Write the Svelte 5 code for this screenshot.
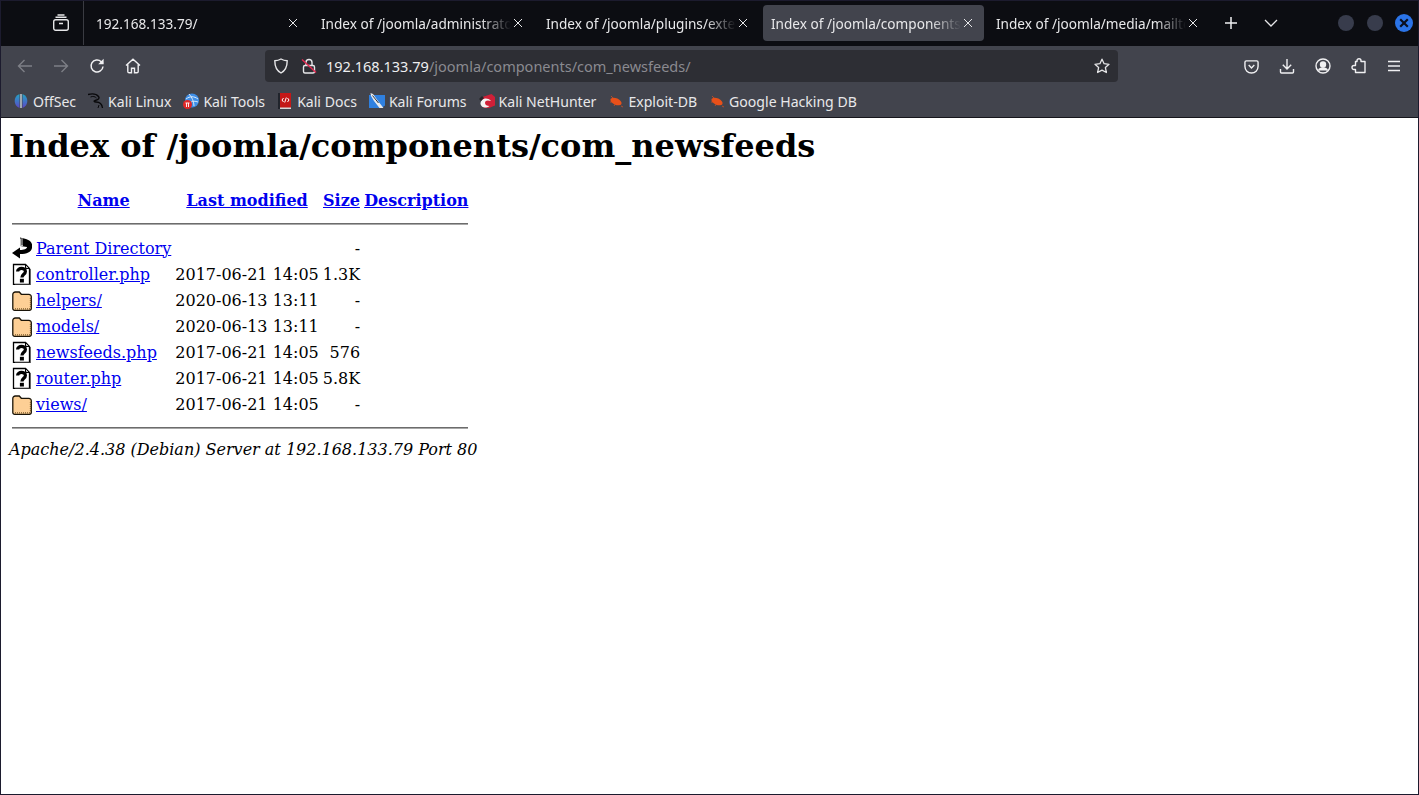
<script>
  const tabs = [
    { title: "192.168.133.79/" },
    { title: "Index of /joomla/administrator/" },
    { title: "Index of /joomla/plugins/extension/" },
    { title: "Index of /joomla/components/com_newsfeeds", active: true },
    { title: "Index of /joomla/media/mailto/" }
  ]

  const bookmarks = [
    { name: "OffSec", icon: "offsec" },
    { name: "Kali Linux", icon: "kali" },
    { name: "Kali Tools", icon: "tools" },
    { name: "Kali Docs", icon: "docs" },
    { name: "Kali Forums", icon: "forums" },
    { name: "Kali NetHunter", icon: "nethunter" },
    { name: "Exploit-DB", icon: "bug" },
    { name: "Google Hacking DB", icon: "bug" }
  ]

  const files = [
    { name: "Parent Directory", date: "", size: "-", icon: "back" },
    { name: "controller.php", date: "2017-06-21 14:05", size: "1.3K", icon: "unknown" },
    { name: "helpers/", date: "2020-06-13 13:11", size: "-", icon: "folder" },
    { name: "models/", date: "2020-06-13 13:11", size: "-", icon: "folder" },
    { name: "newsfeeds.php", date: "2017-06-21 14:05", size: "576", icon: "unknown" },
    { name: "router.php", date: "2017-06-21 14:05", size: "5.8K", icon: "unknown" },
    { name: "views/", date: "2017-06-21 14:05", size: "-", icon: "folder" }
  ]
</script>

<div class="window">
  <div class="tabbar">
    <div class="tabview">
      <svg width="18" height="18" viewBox="0 0 18 18" fill="none" stroke="#e6e6e8" stroke-width="1.4">
        <rect x="1.700" y="5.700" width="14.600" height="10.600" rx="2" />
        <path d="M3.500 3.200h11M5.500 1h7M7 9.500h4" />
      </svg>
    </div>
    <div class="tabs">
      {#each tabs as tab}
        <div class="tab" class:active={tab.active}>
          <span class="tabtitle">{tab.title}</span>
          <svg class="tabclose" width="10" height="10" viewBox="0 0 10 10" stroke="#e6e6e8" stroke-width="1">
            <path d="M1 1l8 8M9 1l-8 8" />
          </svg>
        </div>
      {/each}
    </div>
    <div class="tabactions">
      <svg width="14" height="14" viewBox="0 0 14 14" stroke="#f0f0f2" stroke-width="1.500"><path d="M7 1v12M1 7h12" /></svg>
      <svg width="14" height="8" viewBox="0 0 14 8" fill="none" stroke="#e6e6e8" stroke-width="1.300"><path d="M1 1l6 6 6-6" /></svg>
    </div>
    <div class="winbtns">
      <span class="winbtn"></span>
      <span class="winbtn"></span>
      <span class="winbtn close">
        <svg width="10" height="10" viewBox="0 0 10 10" stroke="#0b1020" stroke-width="2.200"><path d="M1.200 1.200l7.600 7.600M8.800 1.200l-7.600 7.600" /></svg>
      </span>
    </div>
  </div>

  <div class="navbar">
    <div class="navbtns">
      <svg width="16" height="16" viewBox="0 0 16 16" fill="none" stroke="#7d7f86" stroke-width="1.400"><path d="M15 8H1.500M7.500 2L1.500 8l6 6" /></svg>
      <svg width="16" height="16" viewBox="0 0 16 16" fill="none" stroke="#7d7f86" stroke-width="1.400"><path d="M1 8h13.500M8.500 2l6 6-6 6" /></svg>
      <svg width="16" height="16" viewBox="0 0 16 16" fill="none" stroke="#f0f0f2" stroke-width="1.500"><path d="M14 8.500a6 6 0 1 1-1.800-4.800L14 5.500" /><path d="M14.600 0.800v5.400H9.200" fill="#f0f0f2" stroke="none" /></svg>
      <svg width="16" height="16" viewBox="0 0 16 16" fill="none" stroke="#f0f0f2" stroke-width="1.400"><path d="M1 7.500L8 1.200l7 6.300M2.800 6.500v7a1.300 1.300 0 0 0 1.300 1.300h2.400v-4.500h3v4.500h2.400a1.300 1.300 0 0 0 1.300-1.300v-7" /></svg>
    </div>
    <div class="urlbar">
      <svg width="16" height="16" viewBox="0 0 16 16" fill="none" stroke="#e6e6e8" stroke-width="1.400"><path d="M8 1c2 1.200 4 1.700 6.200 1.800 0 5.700-1.700 9.900-6.200 12.200C3.500 12.700 1.800 8.500 1.800 2.800 4 2.700 6 2.200 8 1z" /></svg>
      <svg class="lock" width="16" height="16" viewBox="0 0 16 16" fill="none" stroke="#e6e6e8" stroke-width="1.400">
        <rect x="2.500" y="7.500" width="11" height="7.500" rx="1.500" />
        <path d="M5 7.500V4.500a3 3 0 0 1 6 0v3" />
        <path d="M1 1.500l14 13" stroke="#e22850" stroke-width="1.500" />
      </svg>
      <div class="url"><span class="host">192.168.133.79</span><span class="path">/joomla/components/com_newsfeeds/</span></div>
      <svg width="16" height="16" viewBox="0 0 16 16" fill="none" stroke="#e6e6e8" stroke-width="1.300"><path d="M8 1.200l2.100 4.500 4.900.6-3.600 3.300 1 4.900L8 12.100l-4.400 2.400 1-4.900L1 6.300l4.900-.6z" stroke-linejoin="round" /></svg>
    </div>
    <div class="navtools">
      <svg width="15" height="15" viewBox="0 0 16 16" fill="none" stroke="#f0f0f2" stroke-width="1.500"><path d="M2.500 2h11A1.500 1.500 0 0 1 15 3.500V8a7 7 0 0 1-14 0V3.500A1.500 1.500 0 0 1 2.500 2z" /><path d="M5 6.500L8 9.500l3-3" /></svg>
      <svg width="16" height="16" viewBox="0 0 16 16" fill="none" stroke="#f0f0f2" stroke-width="1.400"><path d="M8 1v10M3.800 6.800L8 11l4.200-4.200M1.500 11v3a1 1 0 0 0 1 1h11a1 1 0 0 0 1-1v-3" /></svg>
      <svg width="16" height="16" viewBox="0 0 16 16" fill="none" stroke="#f0f0f2" stroke-width="1.400"><circle cx="8" cy="8" r="7" /><circle cx="8" cy="6.500" r="2.500" fill="#f0f0f2" /><path d="M3.500 12.500c1-2 2.500-2.500 4.500-2.500s3.500.5 4.500 2.500" fill="#f0f0f2" /></svg>
      <svg width="16" height="16" viewBox="0 0 16 16" fill="none" stroke="#f0f0f2" stroke-width="1.400"><path d="M6 3.500V2.700a2 2 0 0 1 4 0v.8h4v11H4.500v-3H3a2 2 0 0 1 0-4h1.500v-4z" stroke-linejoin="round" /></svg>
      <svg width="14" height="14" viewBox="0 0 14 14" stroke="#f0f0f2" stroke-width="1.500"><path d="M1 2.500h12M1 7h12M1 11.500h12" /></svg>
    </div>
  </div>

  <div class="bookmarks">
    {#each bookmarks as mark}
      <div class="mark">
        <svg class="favicon" width="16" height="16" viewBox="0 0 16 16">
          {#if mark.icon === "offsec"}
            <defs>
              <linearGradient id="offsec-grad" x1="0" y1="0" x2="0" y2="1">
                <stop offset="0" stop-color="#22a4c4" />
                <stop offset="1" stop-color="#5c48c8" />
              </linearGradient>
            </defs>
            <path d="M6.500 1A7.500 7.500 0 0 0 6.500 15z" fill="url(#offsec-grad)" />
            <path d="M9.500 1A7.500 7.500 0 0 1 9.500 15z" fill="url(#offsec-grad)" />
            <path d="M7.300 1h1.400v14H7.300z" fill="#c8d4dc" />
          {:else if mark.icon === "kali"}
            <path d="M0 1.500C4 .5 8.500 1 10.500 3.500 12 5.500 10 7 7 7.500 5.500 8 6 9 8 9c3 0 6 2 6.500 6" fill="none" stroke="#08080a" stroke-width="1.300" />
            <path d="M2.500 4C5 3 7 3.500 8.500 5M11 12l-1 3" fill="none" stroke="#08080a" stroke-width="1" />
          {:else if mark.icon === "tools"}
            <circle cx="9" cy="7.500" r="7" fill="#3f8fe8" />
            <path d="M3 6c4-3 8-3 12 0M6 1c3 3 5 8 5 12M8 9c2-1 4-1 7 0" stroke="#d8e8f8" stroke-width="1" fill="none" />
            <circle cx="4.500" cy="11.500" r="4.500" fill="#e02828" />
            <path d="M2.500 10h4M3.500 10v4M5.500 10v4" stroke="#fff" stroke-width=".9" />
          {:else if mark.icon === "docs"}
            <rect x="1" y="0" width="13" height="15" fill="#c41818" />
            <rect x="1" y="0" width="2" height="16" fill="#20242c" />
            <rect x="3" y="14.500" width="11" height="1.500" fill="#d8d8d8" />
            <path d="M6.500 5L5 7l1.500 2M10.500 5L12 7l-1.500 2M9.300 4.500L7.700 9.500" stroke="#fff" stroke-width="1" fill="none" />
          {:else if mark.icon === "forums"}
            <path d="M0 2h16v10.500L12.500 15H0z" fill="#2f80e0" />
            <path d="M1.500 0l2.500 1 5 7 5.500 7h-4L5 8 2 3z" fill="#e8eaee" />
            <path d="M3.500 2.500l6 7.500" stroke="#30343c" stroke-width="1" />
          {:else if mark.icon === "nethunter"}
            <path d="M2 4.500L12.500 1 16 4v8.500L10 15H5z" fill="#d02038" />
            <path d="M1.500 11c0-5.500 6.500-7.500 10.500-3-3-1-6-1-6 2 0 2 2 3 4.500 3C7 15.500 2.500 15 1.500 11z" fill="#f4f4f4" />
            <path d="M0 6l3-3 2 2-3 3z" fill="#26262a" />
          {:else}
            <ellipse cx="8" cy="8.500" rx="6" ry="3.200" transform="rotate(25 8 8.500)" fill="#e8501a" />
            <path d="M3 3l4 4M2 9l3 0M6 13l2-3M13 13l2 1" stroke="#e8501a" stroke-width="1" stroke-opacity=".7" />
          {/if}
        </svg>
        <span>{mark.name}</span>
      </div>
    {/each}
  </div>

  <div class="page">
    <h1>Index of /joomla/components/com_newsfeeds</h1>
    <table>
      <tbody>
        <tr class="head">
          <th></th>
          <th><a href="#n">Name</a></th>
          <th><a href="#m">Last modified</a></th>
          <th><a href="#s">Size</a></th>
          <th><a href="#d">Description</a></th>
        </tr>
        <tr><th colspan="5"><hr /></th></tr>
        {#each files as file}
          <tr>
            <td class="ico">
              <svg width="20" height="22" viewBox="0 0 20 22">
                {#if file.icon === "back"}
                  <path d="M8 .5L14 2c5 1.500 7 5 6 9-1 4-5 6-12 6v4.500L0 16l8-5.500V13c4 0 7-1 7-3L8 9z" fill="#000" />
                  <path d="M8 1.500h3v7.500H8z" fill="#b8b8b8" />
                  <path d="M9 3h2M9 5h2M9 7h2" stroke="#000" stroke-width=".8" />
                {:else if file.icon === "unknown"}
                  <path d="M1.500 1.500h12l4 4v16h-16z" fill="#fff" stroke="#000" stroke-width="1.300" />
                  <path d="M18.500 6v16H3" fill="none" stroke="#666" stroke-width="1" />
                  <path d="M13.500 1.500v4h4z" fill="#bbb" stroke="#000" stroke-width="1" />
                  <path d="M5.600 8.600C5.600 4.400 13.400 4.400 13.400 8.400c0 2.800-3.500 3-3.500 6.200" fill="none" stroke="#000" stroke-width="3.200" />
                  <rect x="7.900" y="15.800" width="4" height="3.700" fill="#000" />
                {:else}
                  <path d="M.8 5.500A2.500 2.500 0 0 1 3.300 3h4l2 2.300h7.500A2.500 2.500 0 0 1 19.300 8v11.500a1.800 1.800 0 0 1-1.800 1.800H2.600a1.800 1.800 0 0 1-1.800-1.800z" fill="#fdcf95" stroke="#1a1408" stroke-width="1.300" />
                  <path d="M3 19.800h15M18.500 9v10" stroke="#7a5a2a" stroke-width="1.300" stroke-dasharray="1 1" />
                {/if}
              </svg>
            </td>
            <td><a href="#f">{file.name}</a></td>
            <td class="date">{file.date}</td>
            <td class="size">{file.size}</td>
            <td></td>
          </tr>
        {/each}
        <tr><th colspan="5"><hr /></th></tr>
      </tbody>
    </table>
    <address>Apache/2.4.38 (Debian) Server at 192.168.133.79 Port 80</address>
  </div>
</div>

<style>
  :global(body) {
    margin: 0;
    background: #fff;
  }

  .window {
    width: 1419px;
    height: 795px;
    box-sizing: border-box;
    border: 1px solid #1c1b2e;
    display: flex;
    flex-direction: column;
    overflow: hidden;
    font-family: "Noto Sans", sans-serif;
    font-size: 13.6px;
    color: #e8e8ea;
  }

  .tabbar {
    height: 45px;
    flex: none;
    box-sizing: border-box;
    padding-bottom: 1px;
    background: #0c0d12;
    display: flex;
    align-items: center;
  }

  .tabview {
    width: 83px;
    height: 44px;
    box-sizing: border-box;
    flex: none;
    border-right: 1px solid #3a3b42;
    padding-left: 51px;
    display: flex;
    align-items: center;
  }

  .tabs {
    display: flex;
    align-items: center;
    gap: 4px;
    padding-left: 4px;
  }

  .tab {
    width: 221px;
    height: 36px;
    box-sizing: border-box;
    border-radius: 4px;
    padding: 0 11px 0 8px;
    display: flex;
    align-items: center;
    justify-content: space-between;
  }

  .tab.active {
    background: #42444d;
  }

  .tabtitle {
    width: 190px;
    white-space: nowrap;
    overflow: hidden;
    -webkit-mask-image: linear-gradient(to right, #000 84%, transparent);
    mask-image: linear-gradient(to right, #000 84%, transparent);
  }

  .tabclose {
    flex: none;
  }

  .tabactions {
    display: flex;
    align-items: center;
    gap: 26px;
    padding-left: 15px;
  }

  .winbtns {
    margin-left: auto;
    padding-right: 5px;
    display: flex;
    align-items: center;
    gap: 13px;
  }

  .winbtn {
    width: 16px;
    height: 16px;
    border-radius: 50%;
    background: #383c4c;
    display: flex;
    align-items: center;
    justify-content: center;
  }

  .winbtn.close {
    width: 18px;
    height: 18px;
    margin-left: -1px;
    background: #2b74e8;
  }

  .navbar {
    height: 40px;
    flex: none;
    background: #42444d;
    display: flex;
    align-items: center;
  }

  .navbtns {
    width: 264px;
    box-sizing: border-box;
    padding-left: 16px;
    display: flex;
    align-items: center;
    gap: 20px;
  }

  .urlbar {
    width: 853px;
    height: 32px;
    box-sizing: border-box;
    background: #2d2e34;
    border-radius: 4px;
    padding: 0 8px;
    display: flex;
    align-items: center;
    gap: 12px;
  }

  .url {
    flex: 1;
    font-size: 14.5px;
    margin-left: -3px;
  }

  .host {
    color: #eeeef0;
  }

  .path {
    color: #8a8a90;
  }

  .navtools {
    margin-left: auto;
    padding-right: 17px;
    display: flex;
    align-items: center;
    gap: 20px;
  }

  .bookmarks {
    height: 32px;
    flex: none;
    box-sizing: border-box;
    background: #42444d;
    border-bottom: 1px solid #16161c;
    padding: 0 0 1px 12px;
    display: flex;
    align-items: center;
    gap: 12px;
    font-size: 14.07px;
  }

  .mark {
    display: flex;
    align-items: center;
    gap: 4px;
    white-space: nowrap;
  }

  .page {
    flex: 1;
    background: #fff;
    color: #000;
    padding: 8px;
    font-family: "DejaVu Serif", serif;
    font-size: 16px;
  }

  h1 {
    font-size: 32px;
    margin: 0 0 22px;
    line-height: 40px;
  }

  table {
    border-spacing: 2px;
  }

  th, td {
    padding: 1px;
    line-height: 19px;
  }

  .head th {
    padding-bottom: 2px;
  }

  td.ico {
    height: 22px;
    padding: 1px;
    line-height: 0;
  }

  td.size {
    text-align: right;
  }

  td.date {
    white-space: nowrap;
  }

  hr {
    margin: 8px 0;
    border: 0;
    border-top: 1px solid #6c6c6c;
    border-bottom: 1px solid #a8a8a8;
  }

  a {
    color: #0000ee;
  }

  address {
    line-height: 19px;
  }
</style>
